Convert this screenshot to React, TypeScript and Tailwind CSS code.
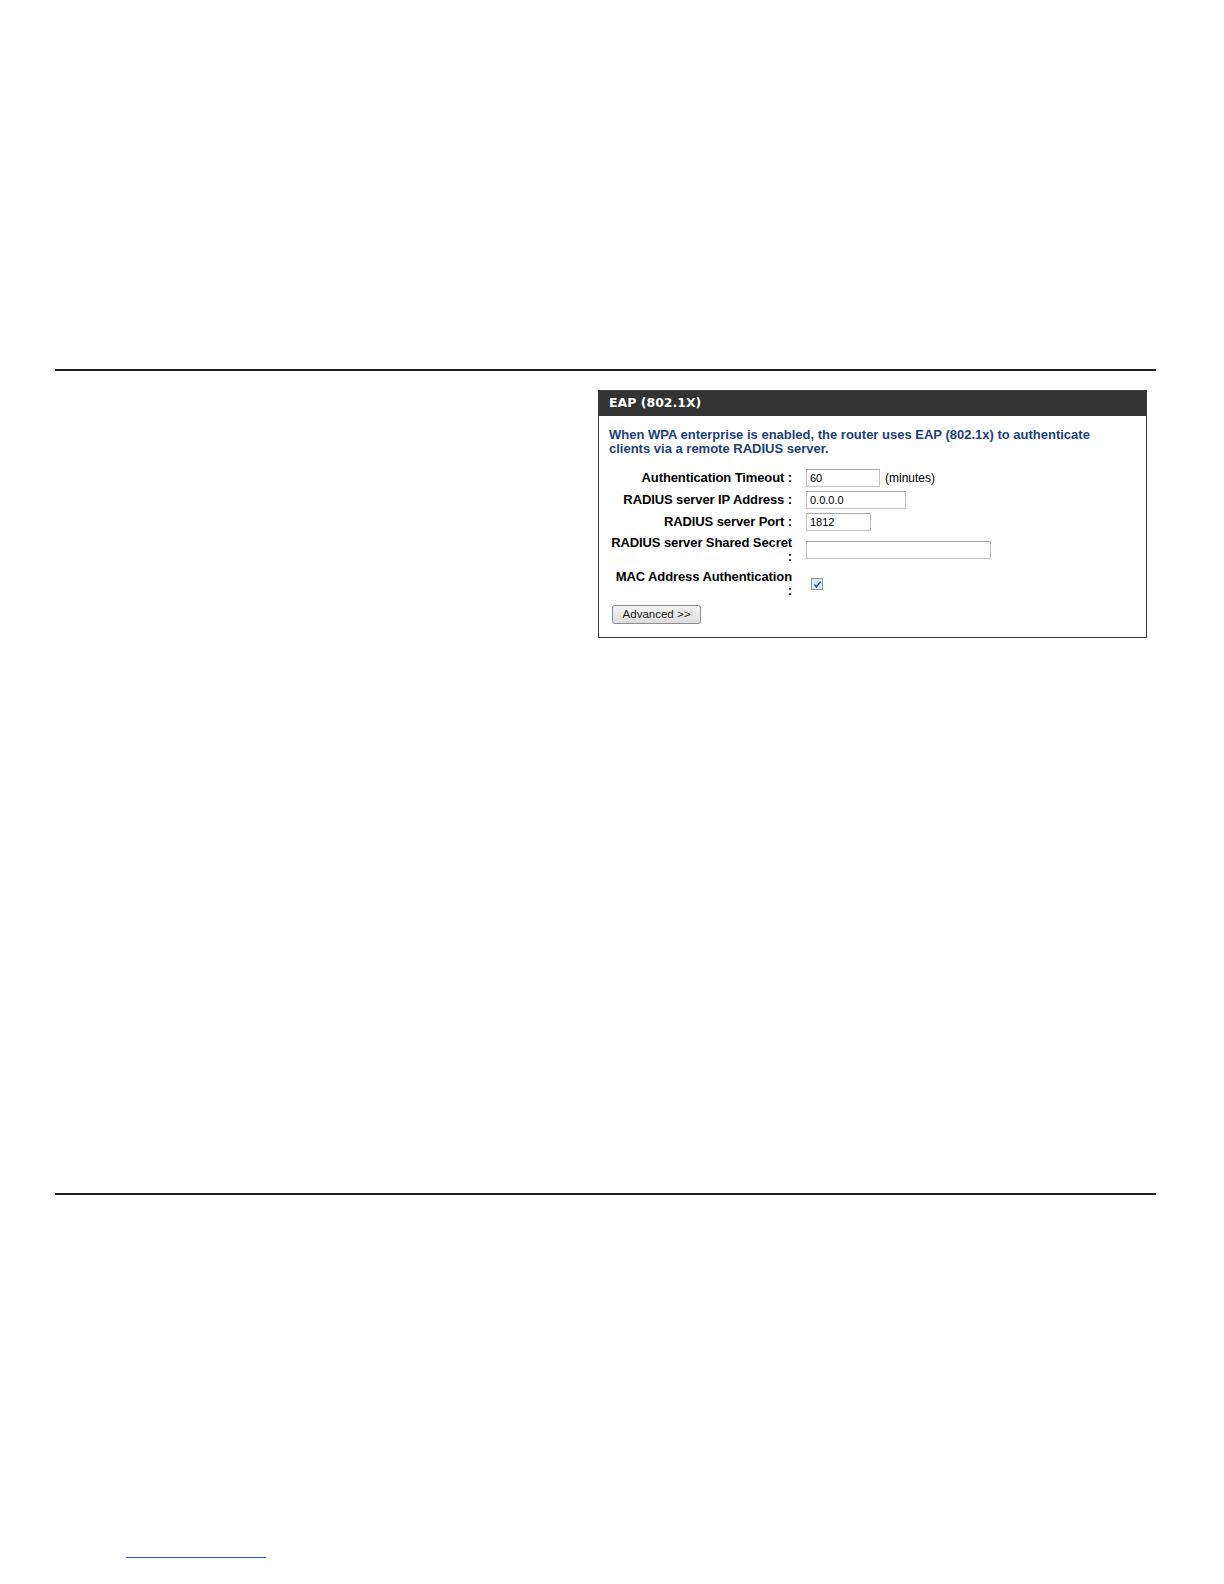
import React from "react";

export default function App() {
  const font = { fontFamily: '"Liberation Sans", Arial, sans-serif' };
  return (
    <div className="w-full bg-white" style={font}>
      <div className="h-[369px]" />
      <div className="ml-[55px] mr-[68px] h-[2px] bg-[#231f20]" />
      <div className="flex justify-end pr-[77px] pt-[19px]">
        <div className="w-[549px] h-[248px] border border-[#3a3a3a] bg-white">
          <div
            className="h-[25px] bg-[#333333] px-[10px] flex items-center text-white font-bold text-[12.5px]"
            style={{ fontFamily: '"DejaVu Sans", Verdana, sans-serif' }}
          >
            EAP (802.1X)
          </div>
          <div className="px-[10px] pt-[12px]">
            <p className="max-w-[505px] text-[#1c3f7a] font-bold text-[13px] leading-[14px]">
              When WPA enterprise is enabled, the router uses EAP (802.1x) to authenticate clients via a remote RADIUS server.
            </p>
            <div className="mt-[13px] flex flex-col gap-[4px] text-[13px] text-black">
              <Row label="Authentication Timeout :">
                <Input w="w-[74px]" value="60" />
                <span className="ml-[5px] text-[12px]">(minutes)</span>
              </Row>
              <Row label="RADIUS server IP Address :">
                <Input w="w-[100px]" value="0.0.0.0" />
              </Row>
              <Row label="RADIUS server Port :">
                <Input w="w-[65px]" value="1812" />
              </Row>
              <Row label="RADIUS server Shared Secret :">
                <Input w="w-[185px]" value="" />
              </Row>
              <Row label="MAC Address Authentication :">
                <div className="ml-[5px] w-[12px] h-[12px] border border-[#8a9bb5] bg-[#dfe6f2] flex items-center justify-center">
                  <svg width="9" height="9" viewBox="0 0 9 9">
                    <path d="M1.5 4.5 L3.5 7 L7.5 1.5" fill="none" stroke="#2b4f8a" strokeWidth="1.4" />
                  </svg>
                </div>
              </Row>
            </div>
            <button className="mt-[6px] ml-[3px] w-[89px] h-[19px] border border-[#8c8c8c] rounded-[3px] bg-gradient-to-b from-[#f4f4f4] to-[#dcdcdc] text-[11.5px] text-[#222] leading-none flex items-center justify-center">
              Advanced &gt;&gt;
            </button>
          </div>
        </div>
      </div>
      <div className="h-[555px]" />
      <div className="ml-[55px] mr-[68px] h-[2px] bg-[#231f20]" />
      <div className="h-[362px]" />
      <div className="ml-[126px] w-[140px] h-[1px] bg-[#3355cc]" />
    </div>
  );
}

function Row({ label, children }: { label: string; children: React.ReactNode }) {
  return (
    <div className="flex items-center">
      <div className="w-[183px] text-right font-bold leading-[14px] py-[1px] tracking-[-0.1px]">{label}</div>
      <div className="ml-[14px] flex items-center">{children}</div>
    </div>
  );
}

function Input({ w, value }: { w: string; value: string }) {
  return (
    <div className={`${w} h-[18px] border border-[#c4c4c4] border-t-[#a8a8a8] bg-white text-[11px] px-[3px] flex items-center`}>
      {value}
    </div>
  );
}
